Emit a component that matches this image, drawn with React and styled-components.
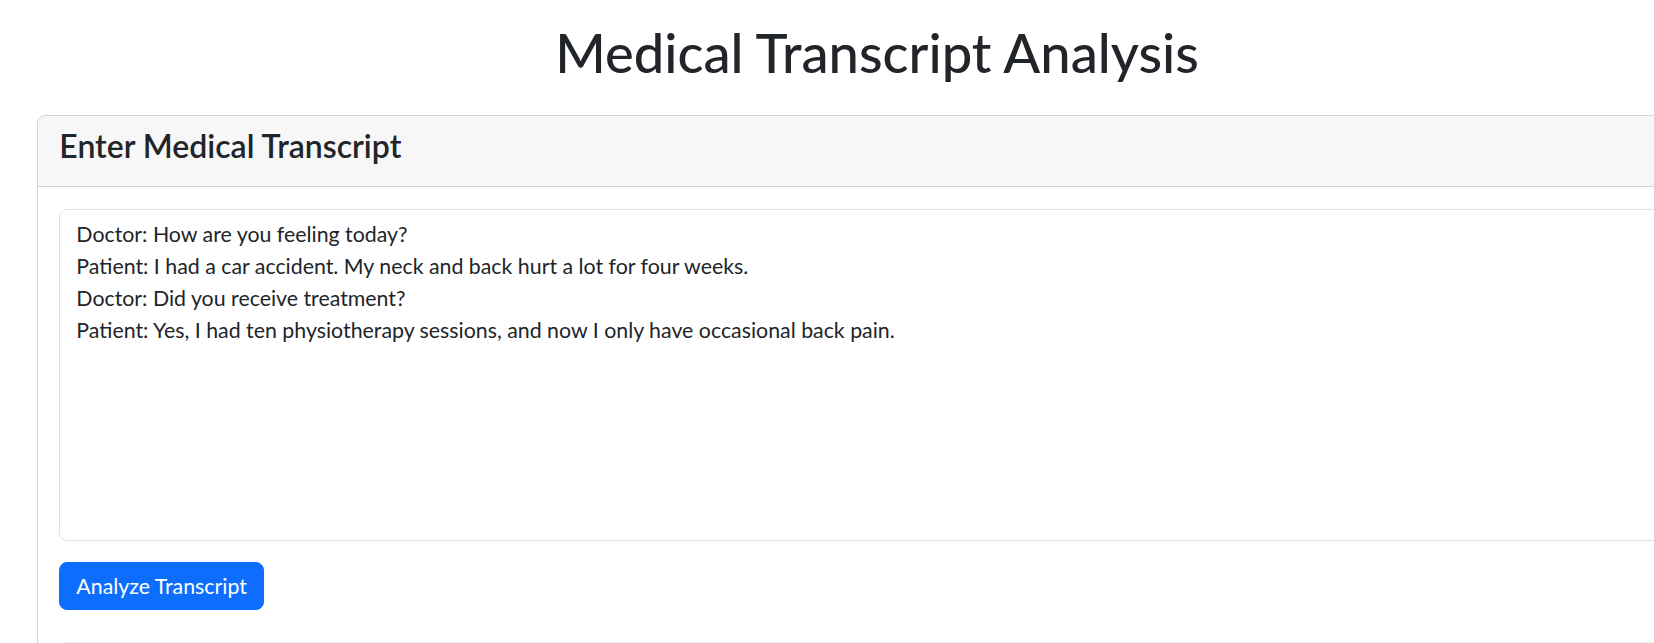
import React, { useState } from "react";
import styled, { createGlobalStyle } from "styled-components";

const palette = {
  text: "#212529",
  border: "#d3d3d3",
  inputBorder: "#dee2e6",
  headerBackground: "#f7f7f7",
  primary: "#0d6efd",
};

const FONT = `"Segoe UI", Lato, "Open Sans", sans-serif`;

const GlobalStyle = createGlobalStyle`
  body {
    margin: 0;
    background: #fff;
    color: ${palette.text};
    font-family: ${FONT};
    font-size: 21.33px;
    line-height: 1.5;
  }
`;

const Page = styled.div`
  width: 1754px;
  box-sizing: border-box;
  padding: 20px 37px 40px 37px;
`;

const Title = styled.h1`
  margin: 0 0 31px 0;
  text-align: center;
  font-size: 54.3px;
  font-weight: 500;
  line-height: 64px;
`;

const Card = styled.section`
  border: 1px solid ${palette.border};
  border-radius: 8px;
  background: #fff;
  overflow: hidden;
`;

const CardHeader = styled.header`
  background-color: ${palette.headerBackground};
  border-bottom: 1px solid ${palette.border};
  padding: 10.67px 21.33px;
`;

const CardTitle = styled.h4`
  margin: 0 0 10.67px 0;
  font-size: 32px;
  font-weight: 600;
  line-height: 38.4px;
`;

const CardBody = styled.div`
  padding: 21.33px;
`;

const TranscriptInput = styled.textarea`
  display: block;
  width: 100%;
  box-sizing: border-box;
  height: 332px;
  margin: 0 0 21.33px 0;
  padding: 8px 16px;
  border: 1px solid ${palette.inputBorder};
  border-radius: 8px;
  font-family: ${FONT};
  font-size: 21.33px;
  line-height: 32px;
  color: ${palette.text};
  resize: vertical;
  outline: none;
`;

const Button = styled.button`
  display: inline-block;
  height: 48px;
  padding: 0 16px;
  border: 1px solid ${palette.primary};
  border-radius: 8px;
  background: ${palette.primary};
  color: #fff;
  font-family: ${FONT};
  font-size: 21.33px;
  line-height: 32px;
  cursor: pointer;
`;

const Results = styled.div`
  margin-top: 32px;
  border: 1px solid #e9ecef;
  border-radius: 8px;
  background: #f8f9fa;
  padding: 21.33px;
  min-height: 120px;
`;

const SAMPLE = `Doctor: How are you feeling today?
Patient: I had a car accident. My neck and back hurt a lot for four weeks.
Doctor: Did you receive treatment?
Patient: Yes, I had ten physiotherapy sessions, and now I only have occasional back pain.`;

export default function App() {
  const [transcript, setTranscript] = useState(SAMPLE);

  return (
    <Page>
      <GlobalStyle />
      <Title>Medical Transcript Analysis</Title>
      <Card>
        <CardHeader>
          <CardTitle>Enter Medical Transcript</CardTitle>
        </CardHeader>
        <CardBody>
          <TranscriptInput
            value={transcript}
            onChange={e => setTranscript(e.target.value)}
          />
          <Button type="button">Analyze Transcript</Button>
          <Results />
        </CardBody>
      </Card>
    </Page>
  );
}
